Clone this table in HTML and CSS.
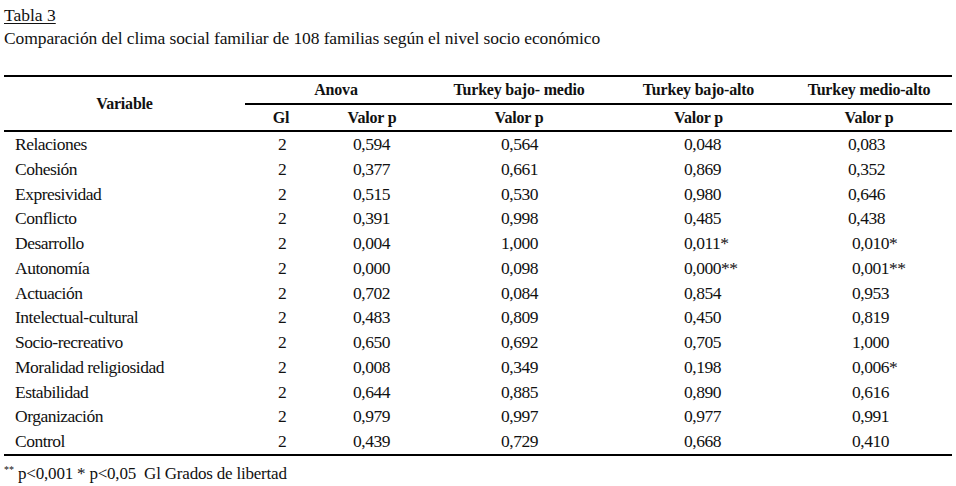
FILE: index.html
```html
<!DOCTYPE html>
<html lang="es">
<head>
<meta charset="utf-8">
<title>Tabla 3</title>
<link rel="stylesheet" href="styles.css">
</head>
<body>
<div class="page">
  <div class="caption">
    <div class="label">Tabla 3</div>
    <div class="title">Comparación del clima social familiar de 108 familias según el nivel socio económico</div>
  </div>
  <table class="data">
    <colgroup>
      <col class="c-var"><col class="c-gl"><col class="c-anova"><col class="c-bm"><col class="c-ba"><col class="c-ma">
    </colgroup>
    <thead>
      <tr class="h1">
        <th rowspan="2" class="var-head">Variable</th>
        <th colspan="2" class="grp">Anova</th>
        <th class="grp">Turkey bajo- medio</th>
        <th class="grp">Turkey bajo-alto</th>
        <th class="grp">Turkey medio-alto</th>
      </tr>
      <tr class="h2">
        <th>Gl</th>
        <th>Valor p</th>
        <th>Valor p</th>
        <th>Valor p</th>
        <th>Valor p</th>
      </tr>
    </thead>
    <tbody>
      <tr><td class="name">Relaciones</td><td class="gl">2</td><td class="v3">0,594</td><td class="v4">0,564</td><td class="v5">0,048</td><td class="v6">0,083</td></tr>
      <tr><td class="name">Cohesión</td><td class="gl">2</td><td class="v3">0,377</td><td class="v4">0,661</td><td class="v5">0,869</td><td class="v6">0,352</td></tr>
      <tr><td class="name">Expresividad</td><td class="gl">2</td><td class="v3">0,515</td><td class="v4">0,530</td><td class="v5">0,980</td><td class="v6">0,646</td></tr>
      <tr><td class="name">Conflicto</td><td class="gl">2</td><td class="v3">0,391</td><td class="v4">0,998</td><td class="v5">0,485</td><td class="v6">0,438</td></tr>
      <tr><td class="name">Desarrollo</td><td class="gl">2</td><td class="v3">0,004</td><td class="v4">1,000</td><td class="v5">0,011*</td><td class="v6 shift">0,010*</td></tr>
      <tr><td class="name">Autonomía</td><td class="gl">2</td><td class="v3">0,000</td><td class="v4">0,098</td><td class="v5">0,000**</td><td class="v6 shift">0,001**</td></tr>
      <tr><td class="name">Actuación</td><td class="gl">2</td><td class="v3">0,702</td><td class="v4">0,084</td><td class="v5">0,854</td><td class="v6 shift">0,953</td></tr>
      <tr><td class="name">Intelectual-cultural</td><td class="gl">2</td><td class="v3">0,483</td><td class="v4">0,809</td><td class="v5">0,450</td><td class="v6 shift">0,819</td></tr>
      <tr><td class="name">Socio-recreativo</td><td class="gl">2</td><td class="v3">0,650</td><td class="v4">0,692</td><td class="v5">0,705</td><td class="v6 shift">1,000</td></tr>
      <tr><td class="name">Moralidad religiosidad</td><td class="gl">2</td><td class="v3">0,008</td><td class="v4">0,349</td><td class="v5">0,198</td><td class="v6 shift">0,006*</td></tr>
      <tr><td class="name">Estabilidad</td><td class="gl">2</td><td class="v3">0,644</td><td class="v4">0,885</td><td class="v5">0,890</td><td class="v6 shift">0,616</td></tr>
      <tr><td class="name">Organización</td><td class="gl">2</td><td class="v3">0,979</td><td class="v4">0,997</td><td class="v5">0,977</td><td class="v6 shift">0,991</td></tr>
      <tr><td class="name">Control</td><td class="gl">2</td><td class="v3">0,439</td><td class="v4">0,729</td><td class="v5">0,668</td><td class="v6 shift">0,410</td></tr>
    </tbody>
  </table>
  <div class="note"><sup class="stars">**</sup> p&lt;0,001 * p&lt;0,05&nbsp; Gl Grados de libertad</div>
</div>
</body>
</html>
```
FILE: styles.css
```css
html, body {
  margin: 0;
  padding: 0;
  background: #ffffff;
}

body {
  font-family: "Liberation Serif", "Times New Roman", serif;
  color: #111111;
  font-size: 17.5px;
  letter-spacing: -0.5px;
}

.page {
  width: 956px;
  height: 486px;
  padding: 4px 0 0 4px;
  box-sizing: border-box;
}

.caption {
  line-height: 23px;
  margin-bottom: 25px;
}

.label {
  letter-spacing: 0;
  text-decoration: underline;
  text-underline-offset: 2px;
}

.title {
  letter-spacing: -0.1px;
}

.data {
  width: 948px;
  border-collapse: collapse;
  table-layout: fixed;
  border-top: 2px solid #000;
  border-bottom: 2px solid #000;
}

.c-var { width: 241px; }
.c-gl { width: 72px; }
.c-anova { width: 110px; }
.c-bm { width: 184px; }
.c-ba { width: 175px; }
.c-ma { width: 166px; }

.data th {
  font-weight: bold;
  font-size: 16px;
  letter-spacing: -0.2px;
  text-align: center;
  padding: 0;
}

.h1 th {
  height: 26px;
  line-height: 26px;
}

.h1 .grp {
  border-bottom: 2px solid #000;
}

.h2 th {
  height: 25px;
  line-height: 25px;
  border-bottom: 2px solid #000;
}

.var-head {
  border-bottom: 2px solid #000;
}

.data td {
  padding: 0;
  height: 24.75px;
  line-height: 24.75px;
  white-space: nowrap;
  vertical-align: middle;
}

.name {
  padding-left: 11px !important;
}

.gl {
  text-align: center;
  padding-left: 2px !important;
}

.v3 { padding-left: 36px !important; }
.v4 { padding-left: 74px !important; }
.v5 { padding-left: 73px !important; }
.v6 { padding-left: 62px !important; }
.v6.shift { padding-left: 66px !important; }

.note {
  margin-top: 6px;
  line-height: 23px;
  font-size: 17px;
  letter-spacing: -0.2px;
}

.stars {
  font-size: 10px;
  letter-spacing: 0;
  vertical-align: 6px;
  line-height: 0;
}
```
